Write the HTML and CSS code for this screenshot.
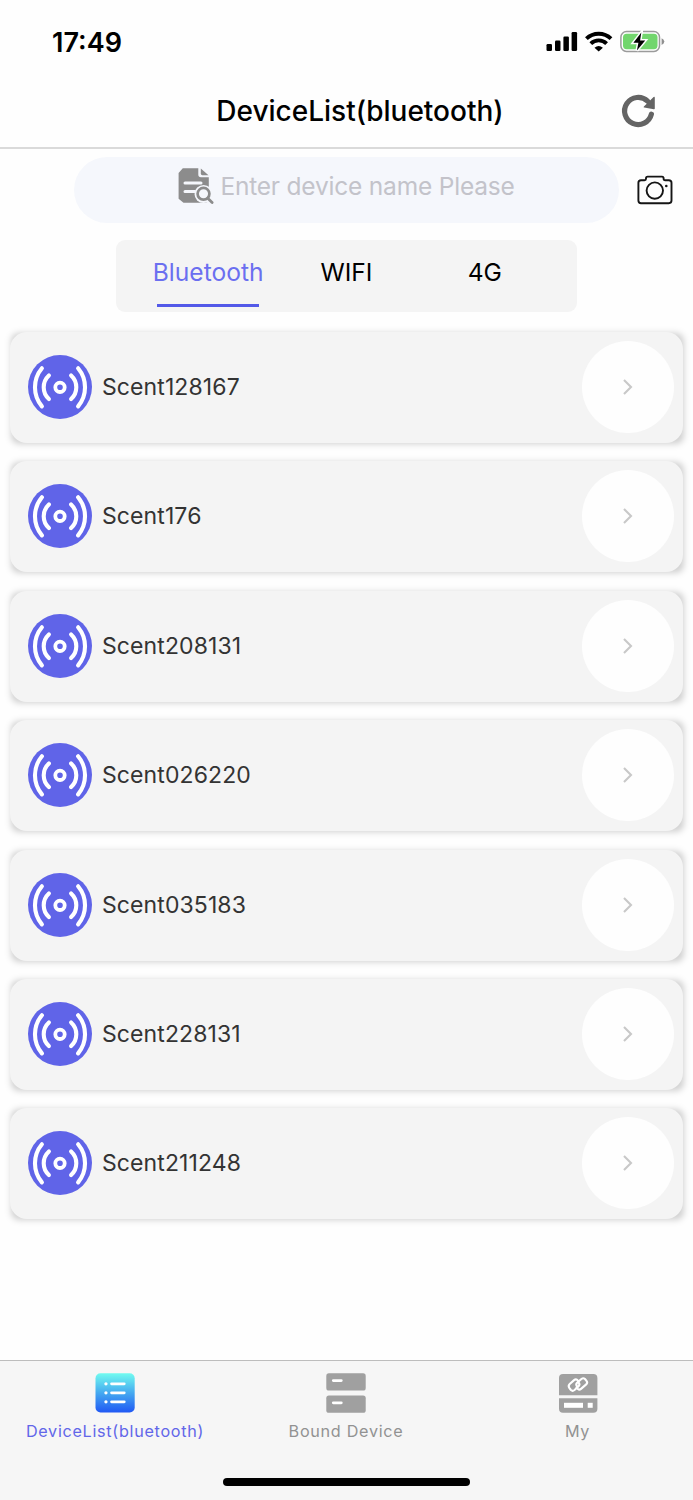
FILE: index.html
```html
<!DOCTYPE html>
<html lang="en">
<head>
    <meta charset="UTF-8">
    <meta name="viewport" content="width=device-width, initial-scale=1.0">
    <title>DeviceList(bluetooth)</title>
    <link rel="stylesheet" href="styles.css">
</head>
<body>

    <!-- Shared icons for the device rows -->
    <svg class="icon-defs" width="0" height="0">
        <symbol id="signal" viewBox="0 0 64 64">
            <circle cx="32" cy="32" r="32" fill="#6064e8"/>
            <g fill="none" stroke="#fff" stroke-width="4.1" stroke-linecap="round">
                <path d="M13.9 13.2A29.8 29.8 0 0 0 13.9 51.4"/>
                <path d="M20.9 20.5A16 16 0 0 0 20.9 44.1"/>
                <path d="M50.1 13.2A29.8 29.8 0 0 1 50.1 51.4"/>
                <path d="M43.1 20.5A16 16 0 0 1 43.1 44.1"/>
                <circle cx="32" cy="32.3" r="4.7" stroke-width="3.8"/>
            </g>
        </symbol>
        <symbol id="chevron" viewBox="0 0 12 18">
            <path d="M2 2L9 9L2 16" fill="none" stroke="#c8c8c8" stroke-width="2.1"/>
        </symbol>
    </svg>

    <div class="status-bar">
        <span class="time">17:49</span>
        <svg width="120" height="24" viewBox="545 30 120 24">
            <rect x="546.5" y="44" width="5.5" height="7" rx="1.2"/>
            <rect x="555" y="40.5" width="5.5" height="10.5" rx="1.2"/>
            <rect x="563.4" y="36.5" width="5.5" height="14.5" rx="1.2"/>
            <rect x="571.6" y="32" width="5.5" height="19" rx="1.2"/>
            <g fill="none" stroke="#000" stroke-width="3.9">
                <path d="M586.4 38.7A17.7 17.7 0 0 1 611 38.7"/>
                <path d="M590.8 43.6A11.3 11.3 0 0 1 606.6 43.6"/>
            </g>
            <path d="M594.5 47.7Q598.7 44.2 602.9 47.7L598.7 51.6Z"/>
            <rect x="620.9" y="31.6" width="38.6" height="19.8" rx="5.6" fill="#fff" stroke="#9b9b9b" stroke-width="1.5"/>
            <rect x="623" y="33.8" width="34.5" height="15.4" rx="3.6" fill="#72d66d"/>
            <path d="M661.6 38.3Q664.3 39.4 664.3 41.6T661.6 45Z" fill="#8f8f8f"/>
            <path d="M641.3 32.6L633.4 42.8H638.4L636.9 50.6L645.2 40.4H640.1Z" stroke="#fff" stroke-width="3" paint-order="stroke"/>
        </svg>
    </div>

    <header class="nav-bar">
        <h1>DeviceList(bluetooth)</h1>
        <svg class="refresh" width="36" height="36" viewBox="0 0 36 36">
            <path d="M31.4 21.2A13.6 13.6 0 1 1 27.6 8.2" fill="none" stroke="#646464" stroke-width="5.2" stroke-linecap="round"/>
            <path d="M33.6 4Q34.8 3.4 34.8 4.8V15.6Q34.8 16.4 33.8 16.3L24.2 14.6Q23 14.2 23.9 13.4Z" fill="#646464"/>
        </svg>
    </header>

    <div class="search-row">
        <div class="search">
            <svg width="36" height="36" viewBox="0 0 36 36">
                <path d="M4.8 .3H20.3V6.6Q20.3 9.3 23 9.3H30.8V32Q30 34.7 27 34.7H5.5L.6 30.8V5Z" fill="#8c8c8c"/>
                <path d="M22.8 .4L30.5 7.3H24.4Q22.8 7.3 22.8 5.6Z" fill="#8c8c8c"/>
                <path d="M7 15H23M7 23.5H17" stroke="#f5f7fc" stroke-width="3" stroke-linecap="round"/>
                <circle cx="25.6" cy="26" r="9.1" fill="#f5f7fc"/>
                <path d="M29 29L35 35" stroke="#f5f7fc" stroke-width="6"/>
                <circle cx="25.5" cy="25.8" r="5.9" fill="none" stroke="#8c8c8c" stroke-width="2.7"/>
                <path d="M30 30.4L34.1 34.4" stroke="#8c8c8c" stroke-width="2.8" stroke-linecap="round"/>
            </svg>
            <span>Enter device name Please</span>
        </div>
        <svg class="camera" width="36" height="30" viewBox="0 0 36 30">
            <g fill="none" stroke="#151515" stroke-width="1.9">
                <path d="M4 5.2H7.5Q9 5.2 9 3.7V3.2Q9 1.6 10.6 1.6H25Q26.6 1.6 26.6 3.2V3.7Q26.6 5.2 28.2 5.2H31.8Q34.5 5.2 34.5 7.8V25.6Q34.5 28.2 31.8 28.2H4Q1.4 28.2 1.4 25.6V7.8Q1.4 5.2 4 5.2Z"/>
                <circle cx="17.8" cy="15.6" r="8.2"/>
            </g>
            <circle cx="29.3" cy="11" r="1.3" fill="#151515"/>
        </svg>
    </div>

    <div class="tabs">
        <div class="tab active"><span>Bluetooth</span></div>
        <div class="tab"><span>WIFI</span></div>
        <div class="tab"><span>4G</span></div>
    </div>

    <main class="device-list">
        <div class="device">
            <svg class="signal"><use href="#signal"/></svg>
            <span class="name">Scent128167</span>
            <div class="go"><svg width="12" height="18"><use href="#chevron"/></svg></div>
        </div>
        <div class="device">
            <svg class="signal"><use href="#signal"/></svg>
            <span class="name">Scent176</span>
            <div class="go"><svg width="12" height="18"><use href="#chevron"/></svg></div>
        </div>
        <div class="device">
            <svg class="signal"><use href="#signal"/></svg>
            <span class="name">Scent208131</span>
            <div class="go"><svg width="12" height="18"><use href="#chevron"/></svg></div>
        </div>
        <div class="device">
            <svg class="signal"><use href="#signal"/></svg>
            <span class="name">Scent026220</span>
            <div class="go"><svg width="12" height="18"><use href="#chevron"/></svg></div>
        </div>
        <div class="device">
            <svg class="signal"><use href="#signal"/></svg>
            <span class="name">Scent035183</span>
            <div class="go"><svg width="12" height="18"><use href="#chevron"/></svg></div>
        </div>
        <div class="device">
            <svg class="signal"><use href="#signal"/></svg>
            <span class="name">Scent228131</span>
            <div class="go"><svg width="12" height="18"><use href="#chevron"/></svg></div>
        </div>
        <div class="device">
            <svg class="signal"><use href="#signal"/></svg>
            <span class="name">Scent211248</span>
            <div class="go"><svg width="12" height="18"><use href="#chevron"/></svg></div>
        </div>
    </main>

    <footer class="tab-bar">
        <nav>
            <div class="item active">
                <svg width="40" height="40" viewBox="0 0 40 40">
                    <defs>
                        <linearGradient id="blue" x1="0" y1="0" x2="0" y2="1">
                            <stop offset="0" stop-color="#71fbf0"/>
                            <stop offset=".5" stop-color="#45a9f0"/>
                            <stop offset="1" stop-color="#2058f4"/>
                        </linearGradient>
                    </defs>
                    <rect x=".5" y=".3" width="39.2" height="39.2" rx="5" fill="url(#blue)"/>
                    <g stroke="#fff" stroke-width="2.7" stroke-linecap="round">
                        <path d="M16.5 10.8H29.3M16.5 19.8H29.3M16.5 28.8H29.3"/>
                        <path d="M10.9 10.8H11M10.9 19.8H11M10.9 28.8H11" stroke-width="3.2"/>
                    </g>
                </svg>
                <span>DeviceList(bluetooth)</span>
            </div>
            <div class="item">
                <svg width="40" height="40" viewBox="0 0 40 40">
                    <rect x=".3" y=".3" width="39.4" height="17.3" rx="2.6" fill="#a0a0a0"/>
                    <rect x=".3" y="22.6" width="39.4" height="17.2" rx="2.6" fill="#a0a0a0"/>
                    <path d="M7.3 7.6H15.3M7.3 29.8H15.3" stroke="#fff" stroke-width="2.8" stroke-linecap="round"/>
                </svg>
                <span>Bound Device</span>
            </div>
            <div class="item">
                <svg width="40" height="40" viewBox="0 0 40 40">
                    <path d="M1 22.3V5Q1 1 5 1H35.4Q39.4 1 39.4 5V22.3Z" fill="#a0a0a0"/>
                    <path d="M1 25.3H39.4V35.8Q39.4 39.7 35.4 39.7H5Q1 39.7 1 35.8Z" fill="#a0a0a0"/>
                    <rect x="6" y="29.8" width="19" height="5" fill="#fff"/>
                    <rect x="29.7" y="29.8" width="5" height="5" fill="#fff"/>
                    <g fill="none" stroke="#fff" stroke-width="2.1" stroke-linecap="round" stroke-linejoin="round">
                        <path d="M20.4 8.2L19.2 6.9Q17.7 5.8 16.1 7.1L11.7 11Q9.9 12.7 11.3 14.9L12.9 17Q14.6 18.6 16.5 17L20.6 13.3Q22.4 11.4 20.4 9.3"/>
                        <path d="M18.6 14.6L19.9 16Q21.4 17.3 23 15.9L28.2 11.4Q30 9.7 28.5 7.8L27 6Q25.3 4.5 23.4 6L19.1 9.8Q17.3 11.6 19.3 13.7"/>
                    </g>
                </svg>
                <span>My</span>
            </div>
        </nav>
        <div class="home-indicator"></div>
    </footer>

</body>
</html>
```
FILE: styles.css
```css
* {
    box-sizing: border-box;
}

body {
    font-family: Inter, "Liberation Sans", sans-serif;
    background-color: #fefefe;
    color: #000;
    margin: 0;
    height: 1500px;
    display: flex;
    flex-direction: column;
}

svg {
    display: block;
    flex-shrink: 0;
}

.icon-defs {
    display: none;
}

.status-bar {
    display: flex;
    justify-content: space-between;
    align-items: center;
    height: 84px;
    padding: 0 28px 0 52px;
}

.time {
    font-size: 27px;
    font-weight: 600;
}

.nav-bar {
    display: grid;
    grid-template-columns: 80px 1fr 53px;
    align-items: center;
    height: 65px;
    padding-bottom: 9px;
    border-bottom: 2px solid #dadada;
}

.nav-bar h1 {
    grid-column: 2;
    margin: 0;
    font-size: 28px;
    font-weight: 500;
    text-align: center;
}

.refresh {
    margin-left: -20px;
}

.search-row {
    display: flex;
    align-items: center;
    gap: 17.5px;
    margin: 8px 0 0 74px;
}

.search {
    display: flex;
    justify-content: center;
    gap: 6px;
    width: 545px;
    height: 66px;
    padding-top: 11px;
    border-radius: 33px;
    background-color: #f5f7fc;
    color: #c3c3ca;
    font-size: 24.5px;
    line-height: 37px;
    letter-spacing: -0.2px;
}

.tabs {
    display: flex;
    width: 461px;
    height: 72px;
    margin: 17px 0 0 116px;
    padding: 0 23px;
    border-radius: 9px;
    background-color: #f4f4f4;
}

.tab {
    display: flex;
    flex-direction: column;
    align-items: center;
    flex: 1;
    padding-top: 16px;
    font-size: 24.6px;
    line-height: 32px;
}

.tab.active {
    color: #6b6ff0;
}

.tab.active::after {
    content: "";
    width: 102px;
    height: 3px;
    margin-top: 16px;
    background-color: #5359e8;
}

.device-list {
    display: flex;
    flex-direction: column;
    gap: 18.4px;
    flex: 1;
    padding: 20px 10px 0;
}

.device {
    position: relative;
    z-index: 0;
    display: flex;
    align-items: center;
    height: 111px;
    padding: 0 9px 1px 18px;
}

.device::before,
.device::after {
    content: "";
    position: absolute;
    inset: 0;
    z-index: -1;
    border-radius: 17px;
    background-color: #f4f4f4;
}

/* squarer shadow that shows through at the card corners */
.device::before {
    inset: 1px -1px -1px 1px;
    border-radius: 8px;
    background-color: rgba(0, 0, 0, 0.18);
    filter: blur(3px);
}

.signal {
    width: 64px;
    height: 64px;
}

.name {
    flex: 1;
    margin-left: 10px;
    color: #333;
    font-size: 23px;
    letter-spacing: 0.1px;
}

.go {
    display: flex;
    justify-content: center;
    align-items: center;
    width: 92px;
    height: 92px;
    border-radius: 50%;
    background-color: #fefefe;
}

.tab-bar {
    height: 140px;
    border-top: 1px solid #bdbdbd;
    background-color: #f6f6f6;
}

.tab-bar nav {
    display: grid;
    grid-template-columns: 230px 232px 1fr;
    height: 117px;
    padding-top: 12px;
}

.item {
    display: flex;
    flex-direction: column;
    align-items: center;
    gap: 8px;
    color: #929292;
    font-size: 16.2px;
    font-weight: 400;
    line-height: 20px;
    letter-spacing: 0.7px;
}

.item.active {
    color: #6266e9;
}

.home-indicator {
    width: 247px;
    height: 8px;
    margin: 0 auto;
    border-radius: 4px;
    background-color: #000;
}
```
